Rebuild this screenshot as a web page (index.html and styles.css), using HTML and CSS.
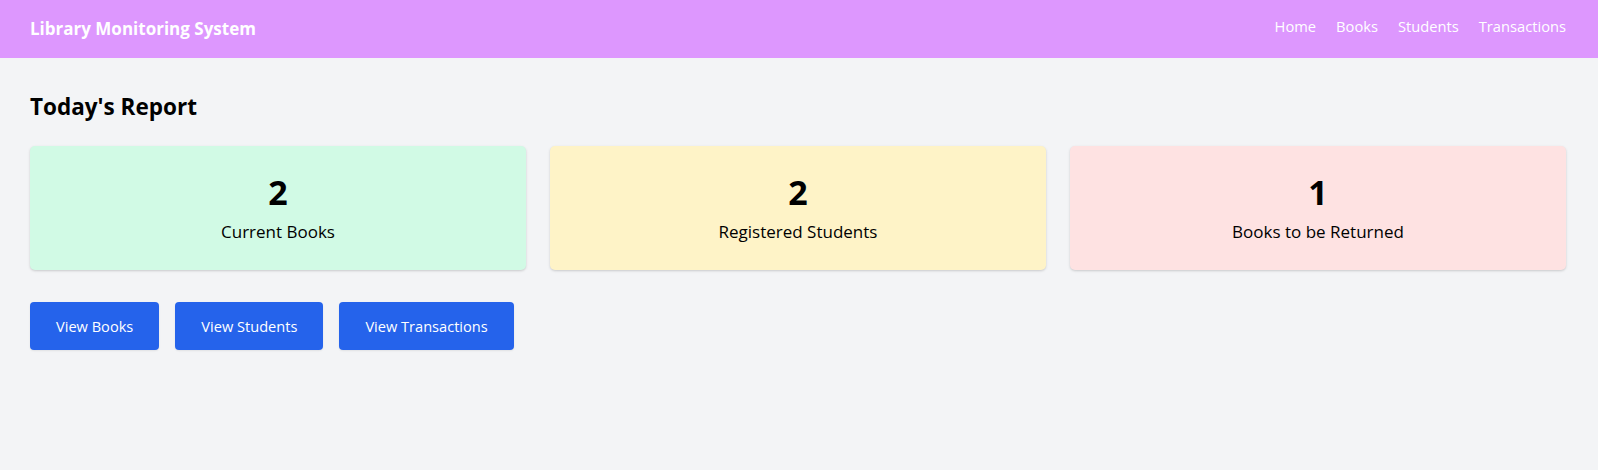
FILE: index.html
```html
<!DOCTYPE html>
<html lang="en">
<head>
<meta charset="utf-8">
<title>Library Monitoring System</title>
<link rel="stylesheet" href="styles.css">
</head>
<body>
<header class="topbar">
  <div class="brand">Library Monitoring System</div>
  <nav class="nav">
    <a href="#" class="nav-link">Home</a>
    <a href="#" class="nav-link">Books</a>
    <a href="#" class="nav-link">Students</a>
    <a href="#" class="nav-link">Transactions</a>
  </nav>
</header>
<main class="content">
  <h1 class="page-title">Today's Report</h1>
  <section class="cards">
    <div class="card card-green">
      <div class="card-number">2</div>
      <div class="card-label">Current Books</div>
    </div>
    <div class="card card-yellow">
      <div class="card-number">2</div>
      <div class="card-label">Registered Students</div>
    </div>
    <div class="card card-red">
      <div class="card-number">1</div>
      <div class="card-label">Books to be Returned</div>
    </div>
  </section>
  <div class="actions">
    <a href="#" class="btn">View Books</a>
    <a href="#" class="btn">View Students</a>
    <a href="#" class="btn">View Transactions</a>
  </div>
</main>
</body>
</html>
```
FILE: styles.css
```css
* { box-sizing: border-box; }

body {
  margin: 0;
  background: #f3f4f6;
  font-family: "Open Sans", "Noto Sans", sans-serif;
  color: #000;
  min-height: 470px;
}

.topbar {
  height: 58px;
  background: #dd97fe;
  display: flex;
  align-items: center;
  justify-content: space-between;
  padding: 0 32px 0 30px;
}

.brand {
  color: #fff;
  font-weight: 700;
  font-size: 17px;
  line-height: 24px;
}

.nav {
  display: flex;
  gap: 20px;
  margin-top: -6px;
}

.nav-link {
  color: #fff;
  text-decoration: none;
  font-size: 14.7px;
  line-height: 24px;
}

.content {
  padding: 0 32px 0 30px;
}

.page-title {
  margin: 33px 0 23px;
  font-size: 22.5px;
  line-height: 32px;
  font-weight: 700;
}

.cards {
  display: grid;
  grid-template-columns: repeat(3, 1fr);
  gap: 24px;
}

.card {
  height: 124px;
  border-radius: 5px;
  box-shadow: 0 1px 3px rgba(0,0,0,0.12), 0 1px 2px rgba(0,0,0,0.06);
  text-align: center;
  padding-top: 26px;
}

.card-green { background: #d1fae5; }
.card-yellow { background: #fef3c7; }
.card-red { background: #fee2e2; }

.card-number {
  font-size: 34px;
  line-height: 40px;
  font-weight: 700;
}

.card-label {
  margin-top: 6px;
  font-size: 17px;
  line-height: 28px;
}

.actions {
  display: flex;
  gap: 16px;
  margin-top: 32px;
}

.btn {
  display: inline-flex;
  align-items: center;
  height: 48px;
  padding: 0 26px;
  background: #2563eb;
  color: #fff;
  text-decoration: none;
  font-size: 14.6px;
  border-radius: 4px;
  box-shadow: 0 1px 2px rgba(0,0,0,0.08);
}
```
